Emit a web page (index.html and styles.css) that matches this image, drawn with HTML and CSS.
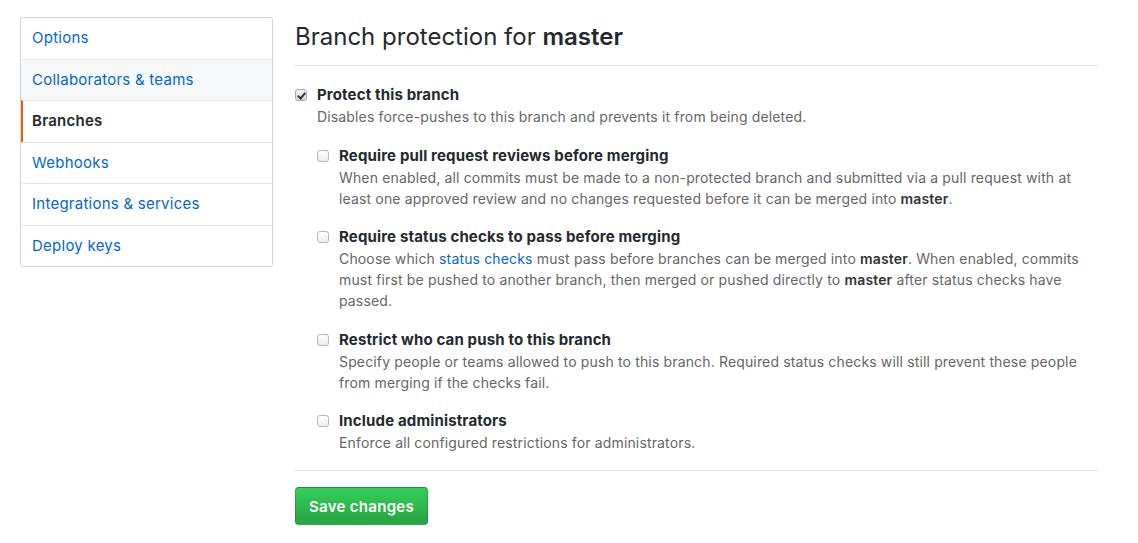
FILE: index.html
```html
<!DOCTYPE html>
<html>
<head>
<meta charset="utf-8">
<link rel="stylesheet" href="styles.css">
</head>
<body>
<div class="page">
  <nav class="menu">
    <a class="menu-item" href="#">Options</a>
    <a class="menu-item hover" href="#">Collaborators &amp; teams</a>
    <a class="menu-item selected" href="#">Branches</a>
    <a class="menu-item" href="#">Webhooks</a>
    <a class="menu-item" href="#">Integrations &amp; services</a>
    <a class="menu-item" href="#">Deploy keys</a>
  </nav>
  <main class="content">
    <h2 class="subhead">Branch protection for <strong>master</strong></h2>
    <div class="option">
      <label class="opt-label"><span class="cb checked"></span>Protect this branch</label>
      <p class="note">Disables force-pushes to this branch and prevents it from being deleted.</p>
      <div class="nested">
        <div class="option">
          <label class="opt-label"><span class="cb"></span>Require pull request reviews before merging</label>
          <p class="note">When enabled, all commits must be made to a non-protected branch and submitted via a pull request with at least one approved review and no changes requested before it can be merged into <strong>master</strong>.</p>
        </div>
        <div class="option">
          <label class="opt-label"><span class="cb"></span>Require status checks to pass before merging</label>
          <p class="note">Choose which <a href="#">status checks</a> must pass before branches can be merged into <strong>master</strong>. When enabled, commits must first be pushed to another branch, then merged or pushed directly to <strong>master</strong> after status checks have passed.</p>
        </div>
        <div class="option">
          <label class="opt-label"><span class="cb"></span>Restrict who can push to this branch</label>
          <p class="note">Specify people or teams allowed to push to this branch. Required status checks will still prevent these people from merging if the checks fail.</p>
        </div>
        <div class="option">
          <label class="opt-label"><span class="cb"></span>Include administrators</label>
          <p class="note">Enforce all configured restrictions for administrators.</p>
        </div>
      </div>
    </div>
    <div class="actions">
      <button class="btn-primary" type="button">Save changes</button>
    </div>
  </main>
</div>
</body>
</html>
```
FILE: styles.css
```css
* { box-sizing: border-box; }
html, body { margin: 0; padding: 0; background: #fff; }
body {
  font-family: Inter, "Liberation Sans", Arial, sans-serif;
  font-size: 14px;
  color: #333;
}
.page {
  display: flex;
  align-items: flex-start;
  padding: 17px 0 0 20px;
  gap: 22px;
}
.menu {
  width: 253px;
  flex: none;
  border: 1px solid #d1d5da;
  border-radius: 3px;
  background: #fff;
  display: flex;
  flex-direction: column;
  overflow: hidden;
}
.menu-item {
  display: block;
  padding: 10px 11px 10px 9px;
  line-height: 20.5px;
  font-size: 15px;
  letter-spacing: 0.25px;
  color: #0366d6;
  text-decoration: none;
  border-top: 1px solid #e1e4e8;
  border-left: 2px solid transparent;
}
.menu-item:first-child { border-top: 0; }
.menu-item.hover { background: #f6f8fa; }
.menu-item.selected {
  color: #24292e;
  font-weight: 600;
  border-left-color: #e36209;
}
.content {
  width: 803px;
  flex: none;
}
.subhead {
  margin: 0 0 18px;
  padding: 4px 0 12px;
  font-size: 24px;
  line-height: 32px;
  font-weight: normal;
  color: #24292e;
  border-bottom: 1px solid #e1e4e8;
}
.subhead strong { font-weight: 600; }
.option { margin: 0; }
.opt-label {
  display: flex;
  align-items: center;
  font-weight: 700;
  font-size: 15px;
  letter-spacing: 0.15px;
  line-height: 22px;
  color: #24292e;
}
.cb {
  width: 12px;
  height: 12px;
  flex: none;
  margin-right: 10px;
  border: 1px solid #b5b5b5;
  border-radius: 3px;
  background: linear-gradient(#fff, #ececec);
  position: relative;
}
.cb.checked {
  background: linear-gradient(#f2f2f2, #dcdcdc);
  border-color: #a8a8a8;
}
.cb.checked::after {
  content: "";
  position: absolute;
  left: 3px;
  top: 1px;
  width: 3px;
  height: 6px;
  border: solid #333;
  border-width: 0 2px 2px 0;
  transform: rotate(40deg);
}
.note {
  margin: 0 0 0 22px;
  font-size: 14px;
  letter-spacing: 0.15px;
  line-height: 21px;
  color: #666;
}
.note a { color: #0366d6; text-decoration: none; }
.note strong { color: #333; font-weight: 600; }
.nested {
  margin: 18px 0 0 22px;
  display: flex;
  flex-direction: column;
  gap: 17.4px;
}
.actions {
  margin-top: 17px;
  border-top: 1px solid #e1e4e8;
  padding-top: 16px;
}
.btn-primary {
  font-family: Inter, "Liberation Sans", Arial, sans-serif;
  font-size: 15px;
  font-weight: 600;
  letter-spacing: 0.3px;
  line-height: 21px;
  color: #fff;
  padding: 7px 12px;
  border: 1px solid rgba(27,31,35,0.2);
  border-radius: 4px;
  background: linear-gradient(#34d058, #28a745 90%);
  width: 133px;
  height: 38px;
}
```
